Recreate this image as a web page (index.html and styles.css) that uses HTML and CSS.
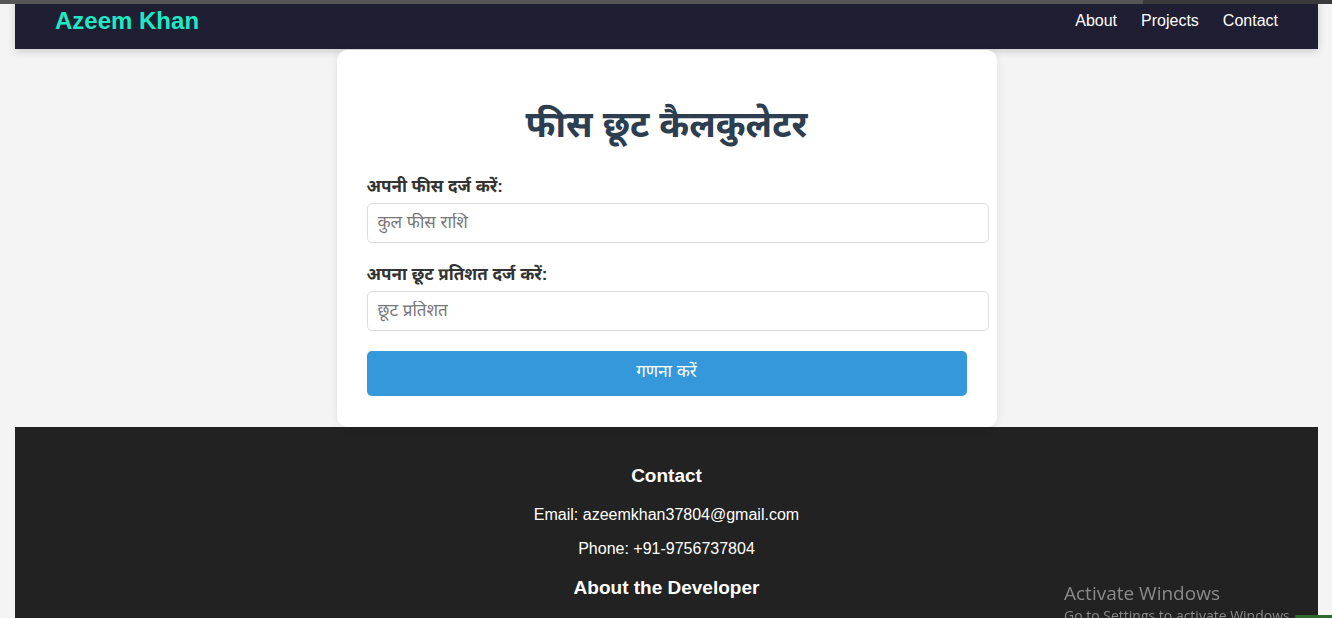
FILE: index.html
```html
<!DOCTYPE html>
<html lang="hi">
<head>
<meta charset="utf-8">
<title>फीस छूट कैलकुलेटर</title>
<link rel="stylesheet" href="styles.css">
</head>
<body>
<div class="topstrip"><span class="topstrip-light"></span></div>
<header class="site-header">
  <div class="logo">Azeem Khan</div>
  <nav class="nav">
    <a href="#">About</a>
    <a href="#">Projects</a>
    <a href="#">Contact</a>
  </nav>
</header>
<main class="main">
  <section class="card">
    <h1 class="title">फीस छूट कैलकुलेटर</h1>
    <label class="label" for="fee">अपनी फीस दर्ज करें:</label>
    <input class="field" id="fee" type="text" placeholder="कुल फीस राशि">
    <label class="label" for="disc">अपना छूट प्रतिशत दर्ज करें:</label>
    <input class="field" id="disc" type="text" placeholder="छूट प्रतिशत">
    <button class="btn" type="button">गणना करें</button>
  </section>
</main>
<footer class="footer">
  <h3 class="footer-title">Contact</h3>
  <p class="footer-line">Email: azeemkhan37804@gmail.com</p>
  <p class="footer-line">Phone: +91-9756737804</p>
  <h3 class="footer-title second">About the Developer</h3>
</footer>
<div class="watermark">
  <div class="wm-big">Activate Windows</div>
  <div class="wm-small">Go to Settings to activate Windows.</div>
</div>
<div class="greenbar"></div>
</body>
</html>
```

FILE: styles.css
```css
html, body {
  margin: 0;
  padding: 0;
  background: #f4f4f4;
  overflow: hidden;
}
body {
  padding: 0 14px 0 15px;
  font-family: "Liberation Sans", Arial, "Noto Sans Devanagari", "Lohit Devanagari", sans-serif;
  color: #333;
}
.topstrip {
  position: fixed;
  top: 0;
  left: 0;
  right: 0;
  height: 4px;
  background: #3a3a3a;
  z-index: 10;
}
.topstrip-light {
  display: block;
  width: 1143px;
  height: 4px;
  background: #555;
}
.site-header {
  height: 49px;
  background: #1f1e33;
  box-shadow: 0 2px 8px rgba(0,0,0,0.18);
  display: flex;
  align-items: center;
  justify-content: space-between;
  padding: 0 40px 8px 40px;
  box-sizing: border-box;
}
.logo {
  color: #1de9c5;
  font-size: 24px;
  font-weight: bold;
  font-family: "Liberation Sans", Arial, sans-serif;
}
.nav {
  display: flex;
  gap: 24px;
}
.nav a {
  color: #fff;
  text-decoration: none;
  font-size: 16px;
  font-family: "Liberation Sans", Arial, sans-serif;
}
.main {
  display: flex;
  justify-content: center;
  padding-top: 1px;
}
.card {
  width: 660px;
  box-sizing: border-box;
  background: #fff;
  border-radius: 10px;
  box-shadow: 0 0 10px rgba(0,0,0,0.08);
  padding: 52px 30px 31px 30px;
  display: flex;
  flex-direction: column;
  align-items: flex-start;
}
.title {
  align-self: stretch;
  text-align: center;
  margin: 0 0 26px;
  font-size: 36px;
  color: #2c3e50;
  font-weight: bold;
  line-height: 1.3;
}
.label {
  font-weight: bold;
  font-size: 17px;
  line-height: 24px;
  color: #333;
  margin-bottom: 4px;
}
.field {
  width: 600px;
  padding: 10px;
  border: 1px solid #ddd;
  border-radius: 5px;
  font-size: 17px;
  font-family: inherit;
  line-height: 18px;
  margin-bottom: 20px;
  color: #333;
}
.field::placeholder {
  color: #777;
}
.btn {
  width: 600px;
  height: 45px;
  background: #3498db;
  color: #fff;
  border: none;
  border-radius: 5px;
  font-size: 17px;
  font-family: inherit;
}
.footer {
  background: #222;
  color: #fff;
  text-align: center;
  padding: 38px 0 20px;
  min-height: 200px;
  font-family: "Liberation Sans", Arial, sans-serif;
}
.footer-title {
  margin: 0 0 18px;
  font-size: 19px;
  font-weight: bold;
}
.footer-title.second {
  margin-top: 18px;
}
.footer-line {
  margin: 0 0 14px;
  font-size: 16px;
  line-height: 20px;
}
.watermark {
  position: fixed;
  left: 1064px;
  top: 580px;
  color: #8a8a8a;
  font-family: "Open Sans", "Noto Sans", sans-serif;
  white-space: nowrap;
}
.wm-big {
  font-size: 19px;
  line-height: 26px;
}
.wm-small {
  font-size: 14px;
  line-height: 20px;
}
.greenbar {
  position: fixed;
  left: 1295px;
  right: 0;
  top: 615px;
  height: 3px;
  background: #2d6b2d;
}
```
